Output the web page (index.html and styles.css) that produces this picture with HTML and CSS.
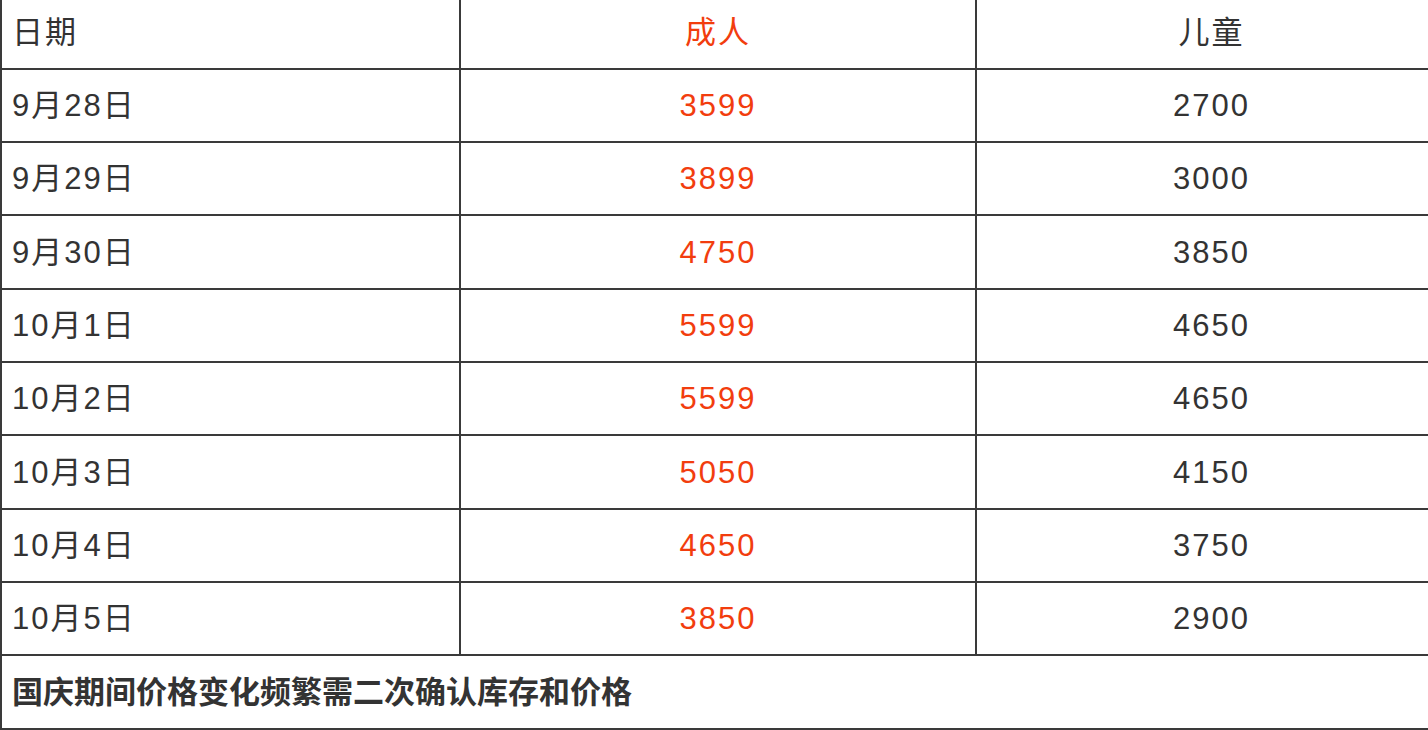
FILE: index.html
```html
<!DOCTYPE html>
<html lang="zh">
<head>
<meta charset="utf-8">
<title>国庆价格</title>
<link rel="stylesheet" href="styles.css">
</head>
<body>
<table class="price-table">
  <colgroup>
    <col class="col-date">
    <col class="col-adult">
    <col class="col-child">
  </colgroup>
  <tr>
    <td class="date">日期</td>
    <td class="adult">成人</td>
    <td class="child">儿童</td>
  </tr>
  <tr><td class="date">9月28日</td><td class="adult">3599</td><td class="child">2700</td></tr>
  <tr><td class="date">9月29日</td><td class="adult">3899</td><td class="child">3000</td></tr>
  <tr><td class="date">9月30日</td><td class="adult">4750</td><td class="child">3850</td></tr>
  <tr><td class="date">10月1日</td><td class="adult">5599</td><td class="child">4650</td></tr>
  <tr><td class="date">10月2日</td><td class="adult">5599</td><td class="child">4650</td></tr>
  <tr><td class="date">10月3日</td><td class="adult">5050</td><td class="child">4150</td></tr>
  <tr><td class="date">10月4日</td><td class="adult">4650</td><td class="child">3750</td></tr>
  <tr><td class="date">10月5日</td><td class="adult">3850</td><td class="child">2900</td></tr>
  <tr><td class="note" colspan="3">国庆期间价格变化频繁需二次确认库存和价格</td></tr>
</table>
</body>
</html>
```
FILE: styles.css
```css
html, body {
  margin: 0;
  padding: 0;
  overflow: hidden;
  background: #ffffff;
}

.price-table {
  border-collapse: collapse;
  table-layout: fixed;
  width: 1446px;
  margin-top: -5.5px;
  font-family: "Liberation Sans", Arial, "Noto Sans CJK SC", sans-serif;
  font-size: 31px;
  letter-spacing: 2px;
  color: #333333;
}

.col-date { width: 459px; }
.col-adult { width: 516px; }
.col-child { width: 471px; }

.price-table td {
  border: 2px solid #3a3a3a;
  height: 73.33px;
  padding: 0 10px;
  line-height: 1.2;
  box-sizing: border-box;
  vertical-align: middle;
}

.price-table td.adult,
.price-table td.child {
  text-align: center;
}

.price-table td.adult {
  color: #f23d0e;
}

.price-table td.note {
  font-weight: bold;
  font-size: 31px;
  letter-spacing: 0;
}
```
